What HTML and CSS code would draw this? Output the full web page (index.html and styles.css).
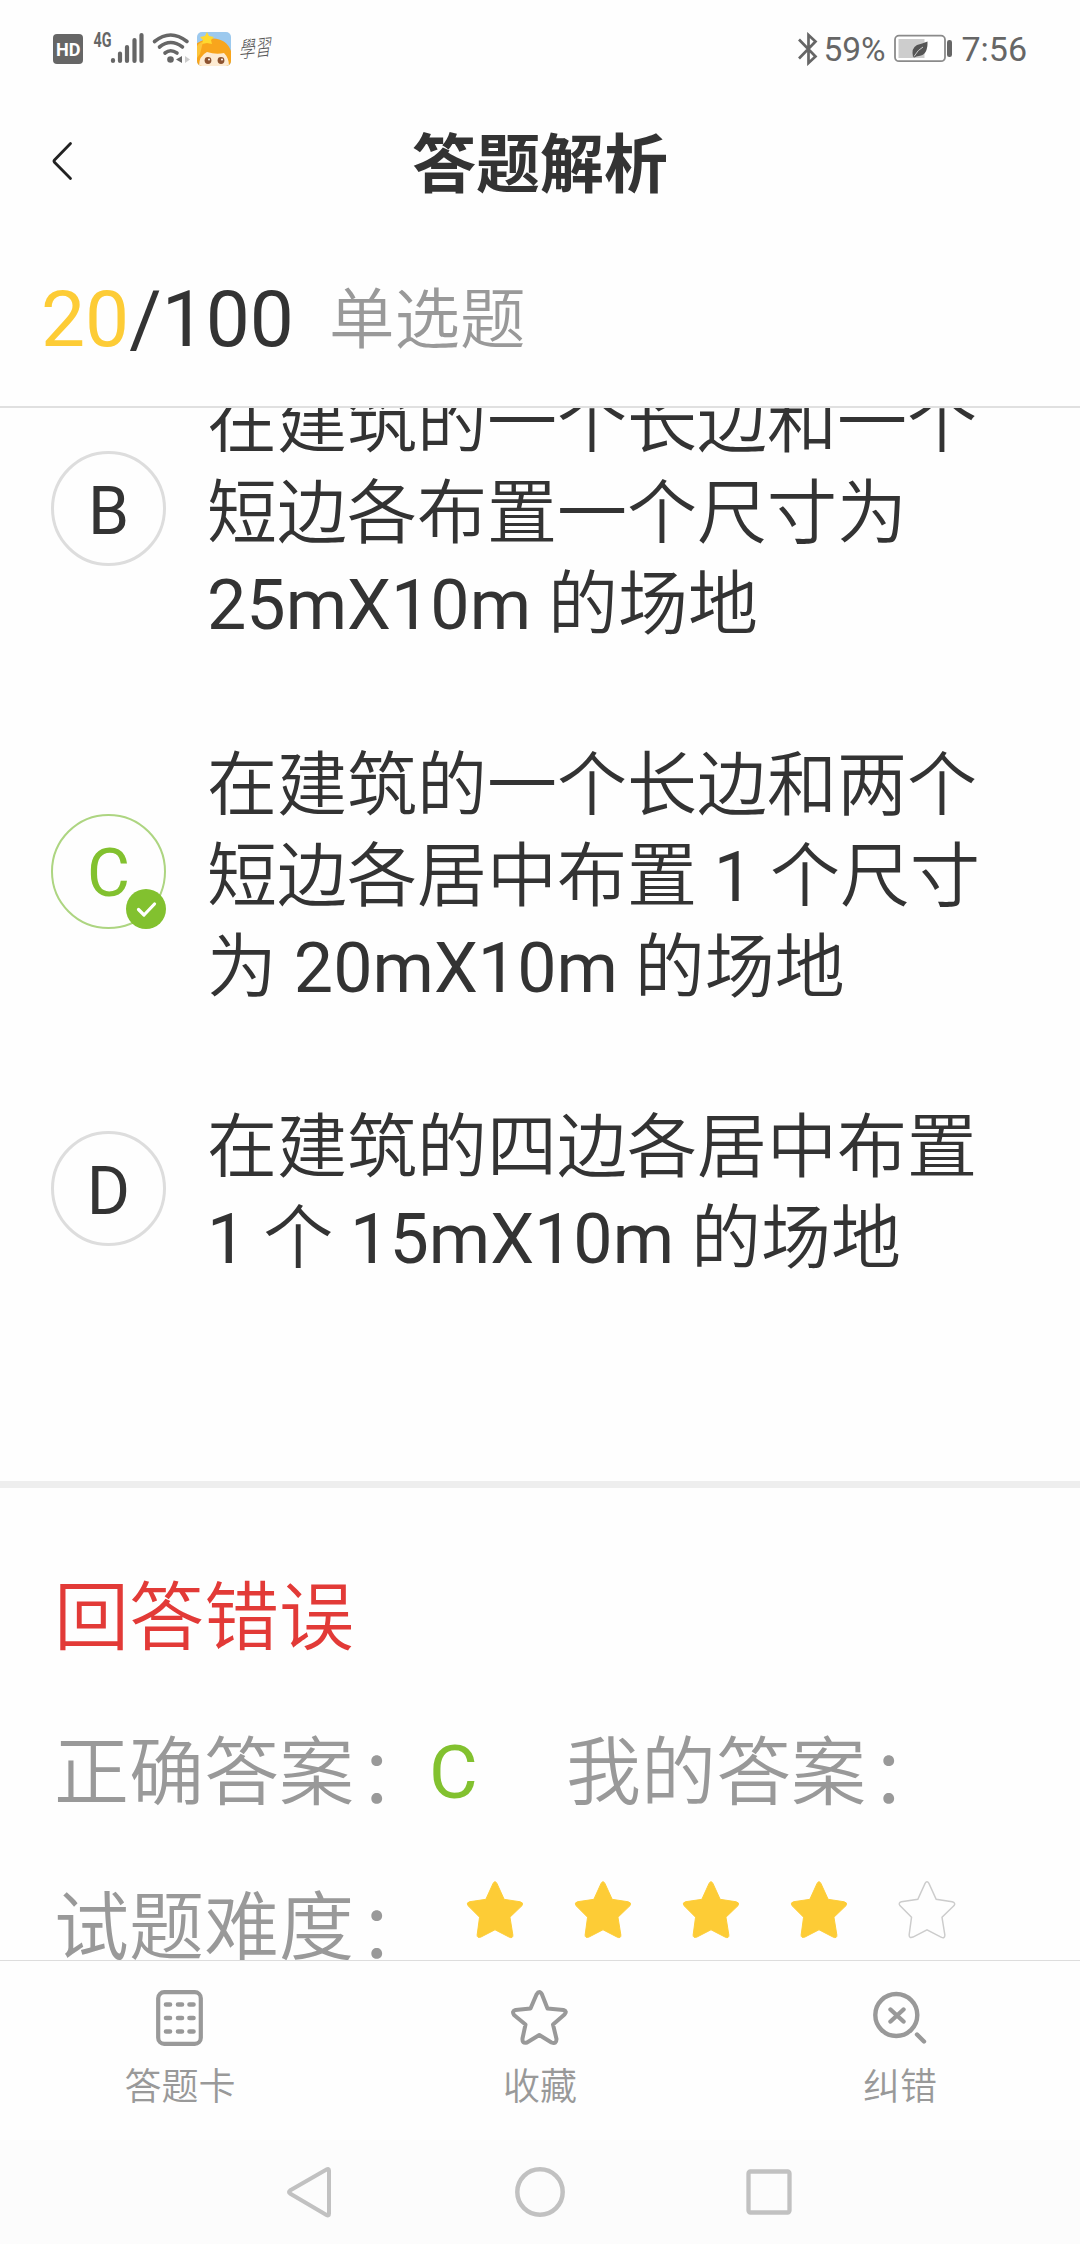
FILE: index.html
```html
<!DOCTYPE html>
<html lang="zh-CN">
<head>
<meta charset="utf-8">
<title>答题解析</title>
<link rel="stylesheet" href="styles.css">
</head>
<body>
<div class="screen">
  <div class="status">
    <div class="status-left">
      <svg class="ic-left" viewBox="0 0 240 60">
        <rect x="13" y="14" width="30" height="30" rx="4" fill="#666"/>
        <text x="16" y="36" class="hd-text" textLength="24.500" lengthAdjust="spacingAndGlyphs">HD</text>
        <text x="53.500" y="27" class="g4-text" textLength="18" lengthAdjust="spacingAndGlyphs">4G</text>
        <g stroke="#666" stroke-width="4.200" stroke-linecap="round">
          <path d="M73 40v1M80 33.500v7.500M87 27v14M94.500 20v21M101.500 15v26"/>
        </g>
        <g fill="none" stroke="#666" stroke-width="3.600" stroke-linecap="round">
          <path d="M114.500 21.500Q130.500 8.500 147 21.500M119.500 27Q130.500 18 142.500 27M125 33Q130.500 28.500 137 33"/>
        </g>
        <circle cx="130.500" cy="39.500" r="3.300" fill="#666"/>
        <path d="M142 36v7l-6-3.500z" fill="#666"/>
        <path d="M145 36v7l5-3.500z" fill="#ccc"/>
        <g>
          <clipPath id="face"><rect x="157" y="12" width="34" height="34" rx="5"/></clipPath>
          <g clip-path="url(#face)">
            <rect x="157" y="12" width="34" height="34" fill="#9cc9ee"/>
            <path d="M156 46V24Q164 18 173 18.500Q188 19 192 34V46z" fill="#f8a51c"/>
            <path d="M159 46Q159 36 167 32Q176 35 184 33Q189 38 189 46z" fill="#fdebd2"/>
            <path d="M157 26q3-4 6-4l-3 12-3 4z" fill="#fcc43a"/>
            <path d="M167 12l2 4 5 1-3 3 1 4-5-1-5 1 1-4-3-3 5-1z" fill="#ffd92e"/>
            <circle cx="168" cy="40.500" r="3.400" fill="#8d5330"/><circle cx="181" cy="40.500" r="3.400" fill="#8d5330"/>
            <circle cx="169" cy="39.500" r="1" fill="#fff"/><circle cx="182" cy="39.500" r="1" fill="#fff"/>
          </g>
        </g>
        <text x="0" y="0" class="brush-text" transform="translate(199 38) rotate(-6) skewX(-4)" textLength="32" lengthAdjust="spacingAndGlyphs">學習</text>
      </svg>
    </div>
    <div class="status-right">
      <svg class="ic-bt" viewBox="0 0 22 34"><path d="M2 7.500L18.500 24.500L11.500 31V3L18.500 9.500L2 26.500" fill="none" stroke="#666" stroke-width="2.700" stroke-linejoin="miter"/></svg>
      <span class="pct">59%</span>
      <svg class="ic-bat" viewBox="0 0 60 30">
        <rect x="1" y="1.700" width="50" height="25.500" rx="4" fill="#fff" stroke="#8a8a8a" stroke-width="1.800"/>
        <rect x="4.500" y="5" width="26" height="19" fill="#cdcdcd"/>
        <rect x="53" y="6" width="5" height="17" rx="2.300" fill="#666"/>
        <path d="M33.500 7.500Q34 21 25 22Q22 22 20.500 23.500L19 23Q17 14 23 11Q28 9.500 33.500 7.500z" fill="#555"/>
        <path d="M20 22.500Q24 15.500 29 13" stroke="#ccc" stroke-width="1" fill="none"/>
      </svg>
      <span class="clock">7:56</span>
    </div>
  </div>

  <header class="titlebar">
    <svg class="back" viewBox="0 0 24 40"><path d="M20.500 2.500L4.500 19Q3.500 20 4.500 21.300L20.500 37.500" fill="none" stroke="#222" stroke-width="2.800" stroke-linecap="round"/></svg>
    <h1 class="title">答题解析</h1>
  </header>

  <div class="progress">
    <span class="count"><span class="current">20</span>/100</span>
    <span class="kind">单选题</span>
  </div>

  <main class="content">
    <ul class="options">
      <li class="option">
        <span class="mark">B</span>
        <p class="text">在建筑的一个长边和一个<br>短边各布置一个尺寸为<br>25mX10m 的场地</p>
      </li>
      <li class="option">
        <span class="mark right">C
          <svg class="tick" viewBox="0 0 40 40"><circle cx="20" cy="20" r="20" fill="#82c12f"/><path d="M12.500 20.500L18 26L28.500 15" fill="none" stroke="#fff" stroke-width="3.200" stroke-linecap="round" stroke-linejoin="round"/></svg>
        </span>
        <p class="text">在建筑的一个长边和两个<br>短边各居中布置 1 个尺寸<br>为 20mX10m 的场地</p>
      </li>
      <li class="option">
        <span class="mark">D</span>
        <p class="text">在建筑的四边各居中布置<br>1 个 15mX10m 的场地</p>
      </li>
    </ul>

    <section class="result">
      <p class="row verdict">回答错误</p>
      <p class="row"><span class="label">正确答案<span class="colon">：</span></span><span class="key">C</span><span class="mine">我的答案<span class="colon">：</span></span></p>
      <div class="row"><span class="label">试题难度<span class="colon">：</span></span>
        <span class="stars">
          <svg class="star" viewBox="0 0 60 60"><use href="#star"/></svg>
          <svg class="star" viewBox="0 0 60 60"><use href="#star"/></svg>
          <svg class="star" viewBox="0 0 60 60"><use href="#star"/></svg>
          <svg class="star" viewBox="0 0 60 60"><use href="#star"/></svg>
          <svg class="star empty" viewBox="0 0 60 60"><use href="#star"/></svg>
        </span>
      </div>
    </section>
  </main>

  <nav class="tabs">
    <a class="tab">
      <svg class="tab-icon" viewBox="0 0 60 60">
        <rect x="8.200" y="4.200" width="42.600" height="51.600" rx="6" fill="none" stroke="#999" stroke-width="4.200"/>
        <path d="M16 16.500h4M28 16.500h4M39.500 16.500h4M16 30h4M28 30h4M39.500 30h4M16 43.500h4M28 43.500h4M39.500 43.500h4" stroke="#999" stroke-width="4.600" stroke-linecap="round"/>
      </svg>
      <span>答题卡</span>
    </a>
    <a class="tab">
      <svg class="tab-icon" viewBox="0 0 60 60"><path d="M26.500 6.500Q29.500 1.500 32 6.500L37.500 20.500L53.500 22Q57.500 23 54.500 26.500L43 36.500L46.500 51Q46.500 56.500 41.500 54.500L29.300 47L17 54.500Q12 56 12.500 50.500L15.500 36.500L4 27Q1.500 23 5.500 22L20.500 20.500z" fill="none" stroke="#999" stroke-width="4" stroke-linejoin="round"/></svg>
      <span>收藏</span>
    </a>
    <a class="tab">
      <svg class="tab-icon" viewBox="0 0 60 60">
        <g fill="none" stroke="#999" stroke-width="4.400" stroke-linecap="round"><circle cx="26.300" cy="27" r="21"/><path d="M20.500 21.500l13 12M33.500 21.500l-13 12M47 46.500l7 7"/></g>
      </svg>
      <span>纠错</span>
    </a>
  </nav>

  <div class="sysnav">
    <svg class="sys-icon" viewBox="0 0 56 56"><path d="M43.500 5.500Q46 4 46 6.500V49.500Q46 52.500 43.500 51L7 29.500Q5 28 7 26.500z" fill="none" stroke="#c1c1c1" stroke-width="4"/></svg>
    <svg class="sys-icon" viewBox="0 0 56 56"><circle cx="28" cy="28" r="22.700" fill="none" stroke="#c1c1c1" stroke-width="4.500"/></svg>
    <svg class="sys-icon" viewBox="0 0 56 56"><rect x="7.500" y="7.500" width="41" height="41" rx="2" fill="none" stroke="#c1c1c1" stroke-width="4.300"/></svg>
  </div>
</div>

<svg class="defs" width="0" height="0">
  <symbol id="star" viewBox="0 0 60 60" overflow="visible"><path d="M28 3.500Q30 0 32 3.500L39.500 20L56 22.500Q60 23.500 58 26.500L45.500 38.500L48.500 57Q48.500 61 44.500 59L30 51.500L15.500 59Q11.500 60.500 11.500 57L14 38.500L2 26.500Q0 23.500 3.500 22.500L20.500 20z"/></symbol>
</svg>
</body>
</html>
```
FILE: styles.css
```css
* { box-sizing: border-box; margin: 0; padding: 0; }
body {
  width: 1080px;
  background: #fefefe;
  color: #333;
  font-family: Roboto, "Noto Sans CJK SC DemiLight", "Noto Sans CJK SC", sans-serif;
}
svg { display: block; flex: none; }
.defs { position: absolute; }
.screen { display: flex; flex-direction: column; height: 2244px; overflow: hidden; }

.status {
  display: flex; justify-content: space-between; height: 98px;
  padding: 20px 53px 0 40px; color: #666; font-size: 34px;
}
.ic-left { width: 240px; height: 60px; }
.hd-text { font: 700 19px Roboto, sans-serif; fill: #fff; }
.g4-text { font: 700 20px Roboto, sans-serif; fill: #666; }
.brush-text { font: italic 300 22px "Noto Sans CJK TC", sans-serif; fill: #555; }
.status-right { display: flex; height: 58px; align-items: center; }
.ic-bt { width: 22px; height: 34px; margin-right: 4px; }
.pct { width: 71px; font-size: 33.500px; }
.ic-bat { width: 60px; height: 30px; margin-right: 7px; }

.titlebar { position: relative; display: flex; justify-content: center; height: 128px; }
.back { position: absolute; left: 50px; top: 43px; width: 24px; height: 40px; }
.title { font-family: Roboto, "Noto Sans CJK SC", sans-serif; font-size: 64px; line-height: 136px; font-weight: 700; }

.progress {
  display: flex; align-items: flex-start; height: 182px; padding-left: 41px;
  border-bottom: 2px solid #e0e0e0;
}
.count { font-size: 78.500px; line-height: 187px; width: 288px; white-space: nowrap; }
.current { color: #fdcc36; }
.kind { font-size: 65.500px; line-height: 190px; color: #999; }

.content { flex: 1; overflow: hidden; min-height: 0; }
.options { list-style: none; height: 1080px; margin-top: -36px; padding: 0 0 0 51px; }
.option { display: flex; align-items: center; gap: 41px; margin-bottom: 89.500px; }
.mark {
  position: relative; flex: none; width: 115px; height: 115px;
  border: 3px solid #ddd; border-radius: 50%;
  font-size: 66px; line-height: 115px; text-align: center;
}
.mark.right { color: #82c12f; border: 2px solid #add581; }
.tick { position: absolute; right: -2px; bottom: -2px; width: 40px; height: 40px; }
.text {
  padding-top: 6px; margin-bottom: -6px;
  font-size: 70px; line-height: 91px; word-spacing: -0.500px; white-space: nowrap;
}

.result { border-top: 7px solid #eee; margin-top: 29px; padding: 53px 0 0 54px; color: #999; }
.row { display: flex; height: 155px; font-size: 75px; line-height: 155px; white-space: nowrap; }
.verdict { color: #e23a37; }
.label { width: 375px; }
.colon { position: relative; top: 4px; padding-left: 4px; letter-spacing: -6px; }
.key { width: 137px; color: #82c12f; line-height: 152px; }
.stars { display: flex; gap: 48px; padding: 29px 0 0 36px; }
.star { width: 60px; height: 58px; fill: #fdcc36; stroke: #fdcc36; stroke-width: 1px; overflow: visible; }
.star.empty { fill: none; stroke: #ccc; stroke-width: 1.500px; }

.tabs { display: flex; height: 180px; border-top: 1px solid #ddd; }
.tab {
  flex: 1; display: flex; flex-direction: column; align-items: center;
  padding-top: 27px; color: #999; font-size: 37px; line-height: 44px; gap: 18px;
}
.tab-icon { width: 60px; height: 60px; }
.sysnav {
  display: flex; justify-content: center; align-items: center; gap: 173px;
  height: 104px; background: #fcfcfc;
}
.sys-icon { width: 56px; height: 56px; }
```
